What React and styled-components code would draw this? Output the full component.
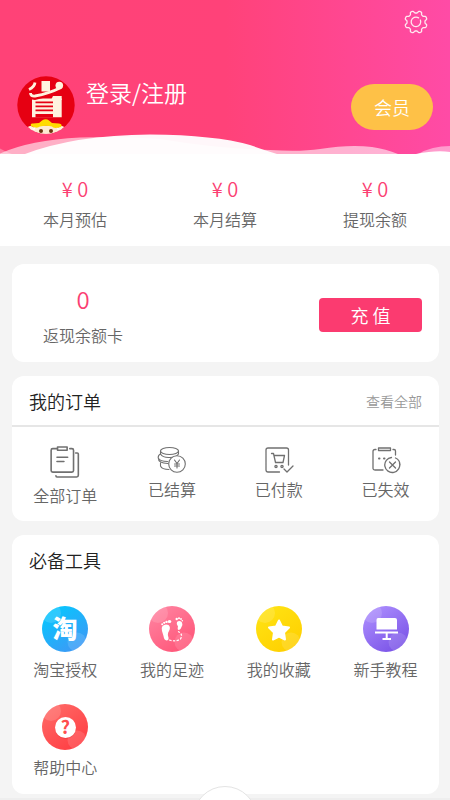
import React from "react";
import styled, { createGlobalStyle } from "styled-components";

const Global = createGlobalStyle`
  * { box-sizing: border-box; }
  body {
    margin: 0;
    background: #f4f4f4;
    font-family: "Noto Sans CJK SC", "Noto Sans", sans-serif;
    font-weight: 350;
    color: #666;
  }
  a { color: inherit; text-decoration: none; }
  h2, p { margin: 0; font-weight: inherit; }
  svg { display: block; }
`;

const Page = styled.div`
  display: flex;
  flex-direction: column;
  height: 100vh;
  overflow: hidden;
`;

const Button = styled.button`
  border: 0;
  padding: 0;
  background: none;
  color: #fff;
  font: inherit;
  font-size: 18px;
  cursor: pointer;
`;

const Header = styled.header`
  display: flex;
  flex-direction: column;
  flex-shrink: 0;
  background: linear-gradient(90deg, #ff4277 0%, #ff4279 50%, #ff4ba6 100%);
`;

const TopBar = styled.div`
  display: flex;
  justify-content: flex-end;
  padding: 10px 22px 0;
`;

const Profile = styled.div`
  display: flex;
  align-items: center;
  margin-top: 42px;
  padding: 0 17px;
`;

const Login = styled.a`
  flex: 1;
  margin: 0 0 26px 11px;
  font-size: 23px;
  line-height: 32px;
  color: #fff;
`;

const Member = styled(Button)`
  width: 82px;
  height: 46px;
  margin-top: 3px;
  border-radius: 23px;
  background: #fec147;
`;

const WaveArt = styled.svg`
  width: 100%;
  height: 24px;
  margin-top: -4px;
`;

const Stats = styled.section`
  display: grid;
  grid-template-columns: repeat(3, 1fr);
  flex-shrink: 0;
  padding: 21px 0 15px;
  background: #fff;
  text-align: center;
`;

const Amount = styled.p`
  font-size: 20px;
  line-height: 28px;
  color: #fb3f73;
`;

const Label = styled.p`
  font-size: 16px;
  line-height: 24px;
`;

const StatLabel = styled(Label)`
  margin-top: 4px;
`;

const Content = styled.main`
  display: flex;
  flex-direction: column;
  flex-shrink: 0;
  gap: 14px;
  padding: 18px 11px 4px 12px;
`;

const Card = styled.section`
  border-radius: 12px;
  background: #fff;
`;

const BalanceCard = styled(Card)`
  display: flex;
  align-items: center;
  justify-content: space-between;
  padding: 19px 17px 15px 31px;
`;

const Balance = styled.div`
  text-align: center;
`;

const BigAmount = styled(Amount)`
  font-size: 24px;
  line-height: 32px;
`;

const BalanceLabel = styled(Label)`
  margin-top: 8px;
`;

const Recharge = styled(Button)`
  width: 103px;
  height: 34px;
  border-radius: 4px;
  background: #fb3b70;
`;

const CardHead = styled.div`
  display: flex;
  align-items: center;
  justify-content: space-between;
  height: 50px;
  padding: 0 17px;
`;

const OrderHead = styled(CardHead)`
  height: 51px;
  border-bottom: 2px solid #e6e6e6;
`;

const Title = styled.h2`
  font-size: 18px;
  line-height: 24px;
  color: #222;
`;

const More = styled.a`
  font-size: 14px;
  color: #999;
`;

const Grid = styled.nav`
  display: grid;
  grid-template-columns: repeat(4, 1fr);
  row-gap: 23px;
  padding: ${(p) => p.$pad};
`;

const Item = styled.a`
  display: flex;
  flex-direction: column;
  align-items: center;
  gap: ${(p) => p.$gap}px;
`;

const TabBar = styled.footer`
  display: flex;
  flex-direction: column;
  align-items: center;
  flex-shrink: 0;
  height: 40px;
  border-top: 2px solid #eee;
  background: #fafafa;
`;

const HomeBump = styled(Button)`
  flex-shrink: 0;
  width: 64px;
  height: 64px;
  margin-top: -14px;
  border: 1px solid #e4e4e4;
  border-radius: 50%;
  background: #fff;
`;

const Line = ({ size = 30, children, ...rest }) => (
  <svg width={size} height={size} viewBox="0 0 30 30" fill="none" stroke="#707070" strokeWidth="1.3" strokeLinecap="round" strokeLinejoin="round" aria-hidden="true" {...rest}>
    {children}
  </svg>
);

function Gear() {
  const pts = [];
  for (let i = 0; i <= 160; i++) {
    const a = (i / 160) * Math.PI * 2;
    const r = 10.1 + 1.15 * Math.tanh(2.2 * Math.cos(8 * a + Math.PI));
    pts.push(`${(12 + r * Math.cos(a)).toFixed(2)} ${(12 + r * Math.sin(a)).toFixed(2)}`);
  }
  return (
    <svg width="24" height="24" viewBox="0 0 24 24" fill="none" stroke="#ffe8f0" strokeWidth="1.3" strokeLinejoin="round" strokeLinecap="round" aria-hidden="true">
      <path d={`M${pts.join("L")}Z`} />
      <path d="M14.600 7.900A4.800 4.800 0 1 0 16.400 10.100" />
    </svg>
  );
}

function Avatar() {
  return (
    <svg width="58" height="58" viewBox="0 0 58 58" role="img" aria-label="头像">
      <defs>
        <clipPath id="face"><circle cx="29" cy="29" r="28.700" /></clipPath>
      </defs>
      <g clipPath="url(#face)">
        <rect width="58" height="58" fill="#e60012" />
        <g fill="#fff3df">
          <rect x="24.500" y="5" width="8.500" height="10.500" />
          <circle cx="42.300" cy="9.500" r="3.800" />
          <path d="M15 22.500H44.700V41.300H15Z" />
        </g>
        <path d="M12 20H45V18L30 21L18 24L12 23Z" fill="#e60012" />
        <path d="M36 20H44.700V24H34Z" fill="#fff3df" />
        <path d="M18.500 26.300H36M18.500 30.300H36M18.500 34.300H36" stroke="#e60012" strokeWidth="1.800" />
        <path d="M18.500 38H36V41.500H18.500Z" fill="#e60012" />
        <path d="M18 6.500Q17.500 11 12 13.500M13.500 17Q13.500 20.500 18 20Q32 17.500 44 11.500" fill="none" stroke="#fff3df" strokeWidth="2.800" />
        <path d="M10 58Q13 50 19 51H38Q45 50 48 58Z" fill="#fff" />
        <circle cx="13.500" cy="53" r="3" fill="#fff3df" />
        <circle cx="44.500" cy="53" r="3" fill="#fff3df" />
        <rect x="17" y="49.500" width="24" height="12" rx="6" fill="#fdebd2" />
        <path d="M14 50Q13 47 16 47.500L22 47L25 44.500Q29 42 32 44.500L35 47L42 47.500Q46 48 44 51Q36 53 35 50.500Q29 49 23 50.500Q20 53 14 50Z" fill="#ffdc00" />
        <circle cx="24" cy="55" r="2" fill="#6b3410" />
        <circle cx="34" cy="55" r="2" fill="#6b3410" />
      </g>
    </svg>
  );
}

function Wave() {
  return (
    <WaveArt viewBox="0 0 450 24" preserveAspectRatio="none" aria-hidden="true">
      <path d="M0 23.500Q30 10 80 7.500Q120 6 160 9Q220 19 270 20Q300 22 320 19Q350 14 372 17Q386 19 398 24H0Z" fill="#fff" fillOpacity=".58" />
      <path d="M0 18.500Q6 22 12 24H0Z" fill="#fff" fillOpacity=".3" />
      <path d="M418 24Q432 16 450 16V24Z" fill="#fff" fillOpacity=".45" />
      <path d="M25 24Q75 5 150 4.500Q215 5 250 15Q264 20 277 24Z" fill="#fff" fillOpacity=".96" />
      <path d="M416 24Q436 20 450 22V24Z" fill="#fff" />
    </WaveArt>
  );
}

const orders = [
  {
    label: "全部订单", gap: 5,
    icon: (
      <Line size={32} strokeWidth="1.5">
        <path d="M7.500 2.500H3.500Q2 2.500 2 4V23Q2 24.500 3.500 24.500H21.500Q23 24.500 23 23V4Q23 2.500 21.500 2.500H19.500M8 1H17V4H8ZM7.500 10.500H17.500M7.500 14.500H14M25 6.500H26.500Q27.500 6.500 27.500 7.500V27.500Q27.500 29 26 29H7.500Q6.500 29 6.500 28" />
      </Line>
    ),
  },
  {
    label: "已结算", gap: 1,
    icon: (
      <Line strokeWidth="1.1">
        <ellipse cx="12.500" cy="5" rx="9" ry="3.500" />
        <path d="M3.500 5V8Q6 12 13 11.500Q19 11.500 21.500 8V5M3.500 8Q1 9 1.200 12Q3 15.500 10.500 15.500M1.500 12.500Q1 17 11 17.500M3.500 17V20Q5 23.500 12 23.500" />
        <circle cx="20" cy="18" r="8.300" fill="#fff" />
        <path d="M17.500 14L20 17.500L22.500 14M20 17.500V22M17.500 18H22.500M17.500 20H22.500" />
      </Line>
    ),
  },
  {
    label: "已付款", gap: 1,
    icon: (
      <Line>
        <path d="M15.500 26H4Q2 26 2 24V4Q2 2 4 2H22.500Q24.500 2 24.500 4V19M20 23L23 26L29 20M7.500 7.500H9.500L11.500 16.500H19L20.500 9.500H10" />
        <circle cx="12" cy="20.500" r="1.100" />
        <circle cx="18" cy="20.500" r="1.100" />
      </Line>
    ),
  },
  {
    label: "已失效", gap: 1,
    icon: (
      <Line>
        <path d="M5 3.500H4Q2 3.500 2 5.500V22.500Q2 24 4 24H12M22 3.500H23Q24.500 3.500 24.500 5V9M7.500 2H19.500V4.500H7.500Z" />
        <path d="M8 12.500H8.500M13 12.500H13.500" strokeWidth="2" />
        <path d="M20.500 11.500A7.500 7.500 0 1 0 28.500 17M24.500 12A7.500 7.500 0 0 1 29 19M18.500 16L24.500 22M24.500 16L18.500 22" />
      </Line>
    ),
  },
];

function Badge({ id, from, to, children }) {
  return (
    <svg width="46" height="46" viewBox="0 0 46 46" aria-hidden="true">
      <defs>
        <linearGradient id={id} x1="0.1" y1="0" x2="0.8" y2="1">
          <stop offset="0" stopColor={from} />
          <stop offset="1" stopColor={to} />
        </linearGradient>
        <clipPath id={`${id}-clip`}><circle cx="23" cy="23" r="23" /></clipPath>
      </defs>
      <g clipPath={`url(#${id}-clip)`}>
        <rect width="46" height="46" fill={`url(#${id})`} />
        <circle cx="9" cy="7" r="10" fill="#fff" fillOpacity=".14" />
        <circle cx="35" cy="36" r="9.500" fill="#fff" fillOpacity=".13" />
      </g>
      {children}
    </svg>
  );
}

const TaoGlyph = styled.text`
  font-family: "Noto Sans CJK SC", sans-serif;
  font-size: 25px;
  font-weight: 900;
  text-anchor: middle;
  fill: #fff;
`;

const HelpGlyph = styled(TaoGlyph)`
  font-size: 18px;
  font-weight: 700;
  fill: #ff4d4d;
`;

const tools = [
  {
    label: "淘宝授权",
    icon: <Badge id="tao" from="#00cbff" to="#4097f5"><TaoGlyph x="23" y="32">淘</TaoGlyph></Badge>,
  },
  {
    label: "我的足迹",
    icon: (
      <Badge id="foot" from="#ff85a2" to="#ff5477">
        <g fill="#fff">
          <path d="M13.500 20Q16 17.500 19.500 19Q22 21 20 25Q18 28 19.500 31.500Q20 34.500 17.500 34.500Q15 34 14.500 30L13 25Q12 22 13.500 20Z" />
          <circle cx="13.200" cy="18.200" r="1" /><circle cx="15.200" cy="16.800" r="1.100" /><circle cx="17.500" cy="15.900" r="1.200" /><ellipse cx="20.500" cy="15.500" rx="1.800" ry="1.600" />
          <path d="M28 16Q30.500 14 33 16.500Q34 19 32.500 21Q31.500 24 30 24Q28 24 29 20.500Q27 18 28 16Z" />
          <circle cx="27.700" cy="13" r="1.200" /><circle cx="30" cy="12.300" r="1" /><circle cx="32" cy="13" r=".9" /><circle cx="33.300" cy="14.700" r=".8" />
        </g>
        <path d="M20 34Q27 36 31.500 33Q34.500 28 29 25.500" fill="none" stroke="#fff" strokeWidth="1.200" strokeDasharray="2.400 1.400" />
      </Badge>
    ),
  },
  {
    label: "我的收藏",
    icon: (
      <Badge id="star" from="#ffe414" to="#ffcf00">
        <path d="M23 14.500L26 20.500L33 21.500L28 26.500L29 33.500L23 30.500L17 33.500L18 26.500L13 21.500L20 20.500Z" fill="#fff" stroke="#fff" strokeWidth="2" strokeLinejoin="round" />
      </Badge>
    ),
  },
  {
    label: "新手教程",
    icon: (
      <Badge id="guide" from="#af91ff" to="#7851e6">
        <path d="M15 12H32Q34 12 34 14V23.500H13.500V14Q13.500 12 15 12ZM12 25.500H35V27.500H24.700V32H28V34H19.500V32H22.700V27.500H12Z" fill="#fff" />
      </Badge>
    ),
  },
  {
    label: "帮助中心",
    icon: (
      <Badge id="help" from="#ff6c68" to="#ff3c42">
        <circle cx="23.500" cy="24.500" r="10.500" fill="#a00" fillOpacity=".15" />
        <circle cx="23.500" cy="23.500" r="10.500" fill="#fff" />
        <HelpGlyph x="23.500" y="30">?</HelpGlyph>
      </Badge>
    ),
  },
];

const stats = ["本月预估", "本月结算", "提现余额"];

export default function App() {
  return (
    <Page>
      <Global />
      <Header>
        <TopBar><Button aria-label="设置"><Gear /></Button></TopBar>
        <Profile>
          <Avatar />
          <Login href="#login">登录/注册</Login>
          <Member>会员</Member>
        </Profile>
        <Wave />
      </Header>
      <Stats>
        {stats.map((s) => (
          <div key={s}>
            <Amount>¥ 0</Amount>
            <StatLabel>{s}</StatLabel>
          </div>
        ))}
      </Stats>
      <Content>
        <BalanceCard>
          <Balance>
            <BigAmount>0</BigAmount>
            <BalanceLabel>返现余额卡</BalanceLabel>
          </Balance>
          <Recharge>充 值</Recharge>
        </BalanceCard>
        <Card>
          <OrderHead>
            <Title>我的订单</Title>
            <More href="#orders">查看全部</More>
          </OrderHead>
          <Grid $pad="19px 0 14px">
            {orders.map((o) => (
              <Item key={o.label} href="#orders" $gap={o.gap}>{o.icon}<Label>{o.label}</Label></Item>
            ))}
          </Grid>
        </Card>
        <Card>
          <CardHead><Title>必备工具</Title></CardHead>
          <Grid $pad="21px 0 15px">
            {tools.map((t) => (
              <Item key={t.label} href="#tools" $gap={5}>{t.icon}<Label>{t.label}</Label></Item>
            ))}
          </Grid>
        </Card>
      </Content>
      <TabBar><HomeBump aria-label="首页" /></TabBar>
    </Page>
  );
}
